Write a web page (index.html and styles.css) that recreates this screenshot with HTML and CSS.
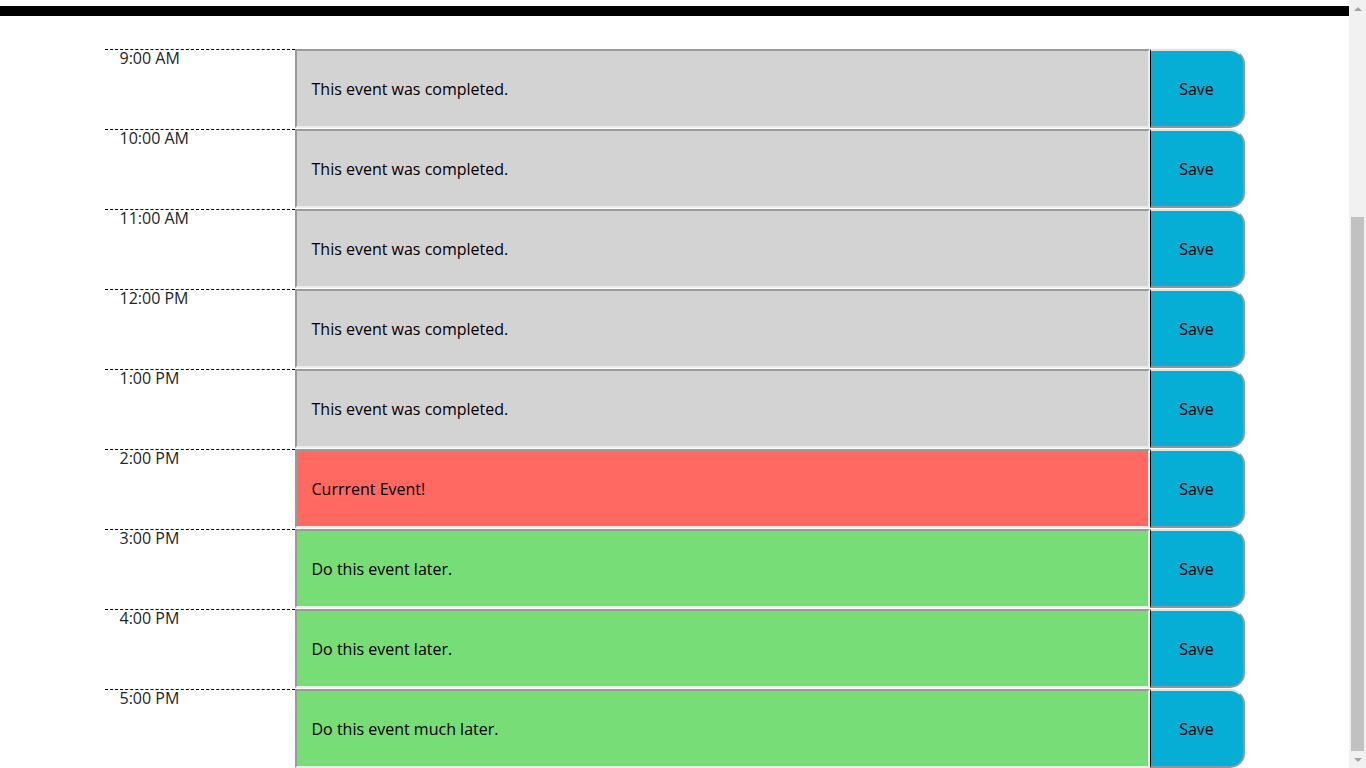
FILE: index.html
```html
<!DOCTYPE html>
<html lang="en">
<head>
<meta charset="utf-8">
<title>Work Day Scheduler</title>
<link rel="stylesheet" href="styles.css">
</head>
<body>
<div class="page">
  <header class="header-bar"></header>
  <main class="container">
    <div class="time-block">
      <div class="hour">9:00 AM</div>
      <textarea class="description past">This event was completed.</textarea>
      <button class="save-btn">Save</button>
    </div>
    <div class="time-block">
      <div class="hour">10:00 AM</div>
      <textarea class="description past">This event was completed.</textarea>
      <button class="save-btn">Save</button>
    </div>
    <div class="time-block">
      <div class="hour">11:00 AM</div>
      <textarea class="description past">This event was completed.</textarea>
      <button class="save-btn">Save</button>
    </div>
    <div class="time-block">
      <div class="hour">12:00 PM</div>
      <textarea class="description past">This event was completed.</textarea>
      <button class="save-btn">Save</button>
    </div>
    <div class="time-block">
      <div class="hour">1:00 PM</div>
      <textarea class="description past">This event was completed.</textarea>
      <button class="save-btn">Save</button>
    </div>
    <div class="time-block">
      <div class="hour">2:00 PM</div>
      <textarea class="description present">Currrent Event!</textarea>
      <button class="save-btn">Save</button>
    </div>
    <div class="time-block">
      <div class="hour">3:00 PM</div>
      <textarea class="description future">Do this event later.</textarea>
      <button class="save-btn">Save</button>
    </div>
    <div class="time-block">
      <div class="hour">4:00 PM</div>
      <textarea class="description future">Do this event later.</textarea>
      <button class="save-btn">Save</button>
    </div>
    <div class="time-block">
      <div class="hour">5:00 PM</div>
      <textarea class="description future">Do this event much later.</textarea>
      <button class="save-btn">Save</button>
    </div>
  </main>
</div>
<div class="scrollbar" aria-hidden="true">
  <div class="sb-arrow"><span class="tri-up"></span></div>
  <div class="sb-track">
    <div class="sb-space"></div>
    <div class="sb-thumb"></div>
  </div>
  <div class="sb-arrow"><span class="tri-down"></span></div>
</div>
</body>
</html>
```

FILE: styles.css
```css
html, body {
  margin: 0;
  padding: 0;
  height: 768px;
  overflow: hidden;
}

body {
  font-family: "Open Sans", "Liberation Sans", sans-serif;
  font-size: 16px;
  line-height: 1.5;
  color: #212529;
  background: #ffffff;
}

.page {
  margin-right: 17px;
}

.header-bar {
  height: 0;
  margin: 6px 0 32px;
  border-bottom: 10px solid #000000;
}

.container {
  max-width: 1140px;
  margin: 0 auto;
}

.time-block {
  box-sizing: border-box;
  display: grid;
  grid-template-columns: 2fr 9fr 1fr;
  grid-template-rows: 1fr;
  height: 80px;
  border-top: 1px solid #ffffff;
}

.hour {
  border-top: 1px dashed #000000;
  padding: 0 15px;
  font-size: 16px;
  line-height: 16px;
  color: #212529;
  background: #ffffff;
}

.description {
  box-sizing: border-box;
  width: 100%;
  height: 100%;
  margin: 0;
  padding: 26px 15px 0;
  border-style: solid;
  border-width: 2px;
  border-color: #9a9a9a #ececec #ececec #9a9a9a;
  font-family: "Open Sans", "Liberation Sans", sans-serif;
  font-size: 16px;
  line-height: 24px;
  color: #000000;
  resize: none;
  overflow: hidden;
  outline: none;
}

.past {
  background-color: #d3d3d3;
}

.present {
  background-color: #ff6961;
}

.future {
  background-color: #77dd77;
}

.save-btn {
  box-sizing: border-box;
  width: 100%;
  height: 100%;
  margin: 0;
  padding: 0;
  border-style: solid;
  border-width: 2px 2px 2px 1px;
  border-color: #e2e2e2 #969696 #969696 #000000;
  border-radius: 0 15px 15px 0;
  background-color: #06aed5;
  font-family: "Open Sans", "Liberation Sans", sans-serif;
  font-size: 16px;
  color: #000000;
  cursor: pointer;
}

/* Browser scrollbar drawn over the right edge */
.scrollbar {
  position: fixed;
  top: 0;
  right: 0;
  width: 17px;
  height: 768px;
  display: flex;
  flex-direction: column;
  background: #f1f1f1;
}

.sb-arrow {
  height: 17px;
  display: flex;
  align-items: center;
  justify-content: center;
}

.tri-up {
  width: 0;
  height: 0;
  border-left: 4px solid transparent;
  border-right: 4px solid transparent;
  border-bottom: 4px solid #a3a3a3;
}

.tri-down {
  width: 0;
  height: 0;
  border-left: 4px solid transparent;
  border-right: 4px solid transparent;
  border-top: 4px solid #a3a3a3;
}

.sb-track {
  flex: 1;
  display: flex;
  flex-direction: column;
}

.sb-space {
  flex: 0 0 200px;
}

.sb-thumb {
  flex: 1;
  margin: 0 2px;
  background: #c1c1c1;
}
```
